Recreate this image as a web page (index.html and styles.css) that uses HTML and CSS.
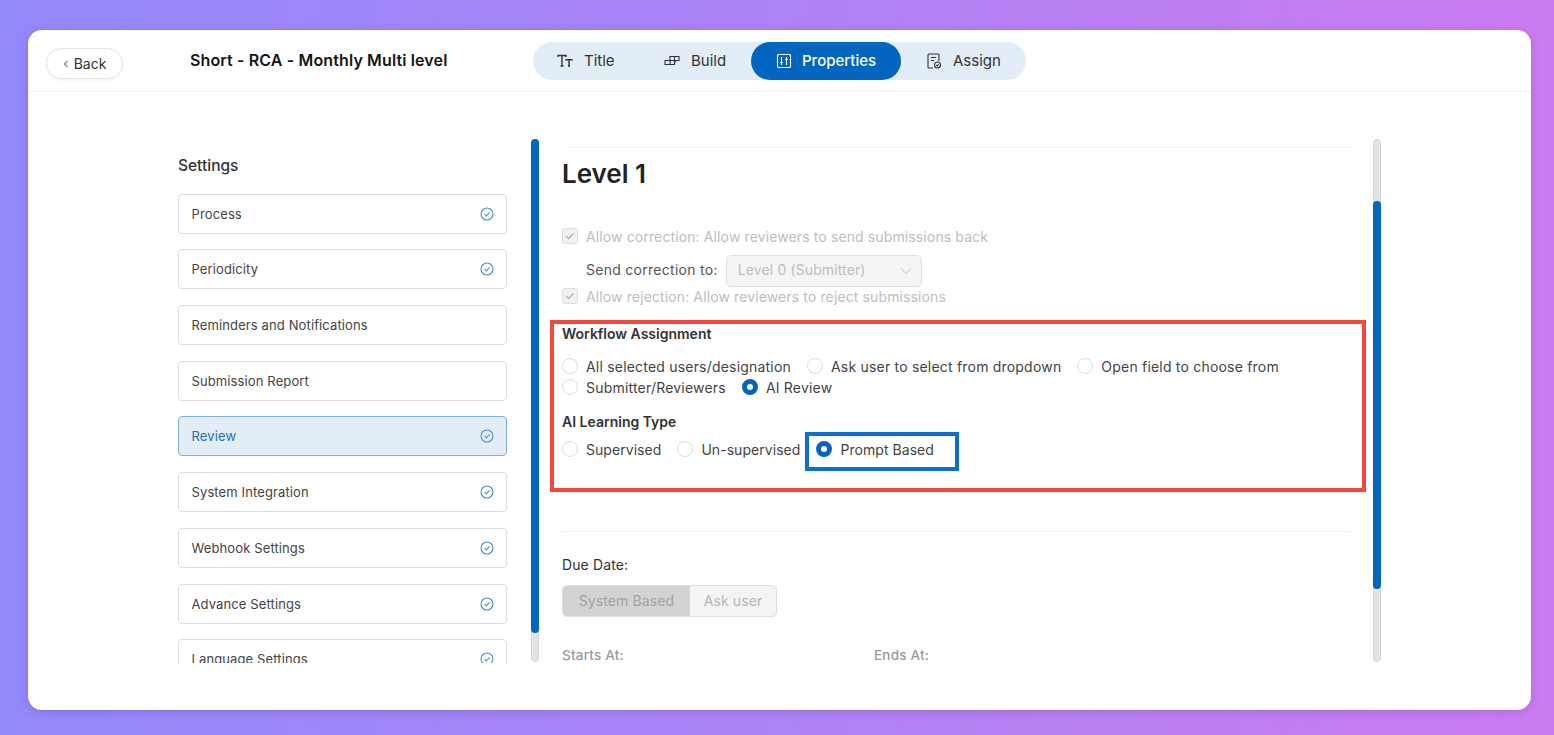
FILE: index.html
```html
<!DOCTYPE html>
<html lang="en">
<head>
<meta charset="utf-8">
<title>Short - RCA - Monthly Multi level</title>
<link rel="stylesheet" href="styles.css">
</head>
<body>
<div class="card">
  <header class="topbar">
    <button class="back"><svg class="back-icon" viewBox="0 0 6 8"><path d="M4.500 1 1.500 4l3 3"/></svg>Back</button>
    <div class="form-title">Short - RCA - Monthly Multi level</div>
    <nav class="tabs">
      <div class="tab tab-title">
        <svg class="tab-icon tab-icon-bold" viewBox="0 0 16 16"><path d="M1 4V2.500h8V4M5 2.500V13M3.500 13h3M9 7.500V6.700h6v.8M12 6.700V13M11 13h2"/></svg>Title
      </div>
      <div class="tab tab-build">
        <svg class="tab-icon" viewBox="0 0 16 16"><path d="M6 3.500h4.500v4H6zM10.500 3.500H15v4h-4.500zM1 7.500h9.500v4H1zM6 7.500v4M11 7.500v2.500"/></svg>Build
      </div>
      <div class="tab tab-active">
        <svg class="tab-icon" viewBox="0 0 16 16"><rect x="1.500" y="1.500" width="13" height="13" rx="1"/><path d="M5.500 4v8M10.500 4v8M4.300 9.500h2.400M9.300 6.500h2.400"/></svg>Properties
      </div>
      <div class="tab tab-assign">
        <svg class="tab-icon" viewBox="0 0 16 16"><path d="M7 15H3a1 1 0 0 1-1-1V2a1 1 0 0 1 1-1h9a1 1 0 0 1 1 1v6M5 4.500h5M5 7.500h3"/><circle cx="11.500" cy="12" r="3"/><path d="m10.300 12 .9.9 1.500-1.600"/></svg>Assign
      </div>
    </nav>
  </header>

  <main class="workspace">
    <aside class="sidebar">
      <h2 class="side-heading">Settings</h2>
      <ul class="side-list">
        <li class="side-item">Process<svg class="done" viewBox="0 0 14 14"><circle cx="7" cy="7" r="6"/><path d="m4.500 7.200 1.800 1.800 3.300-3.600"/></svg></li>
        <li class="side-item">Periodicity<svg class="done" viewBox="0 0 14 14"><circle cx="7" cy="7" r="6"/><path d="m4.500 7.200 1.800 1.800 3.300-3.600"/></svg></li>
        <li class="side-item">Reminders and Notifications</li>
        <li class="side-item">Submission Report</li>
        <li class="side-item side-active">Review<svg class="done" viewBox="0 0 14 14"><circle cx="7" cy="7" r="6"/><path d="m4.500 7.200 1.800 1.800 3.300-3.600"/></svg></li>
        <li class="side-item">System Integration<svg class="done" viewBox="0 0 14 14"><circle cx="7" cy="7" r="6"/><path d="m4.500 7.200 1.800 1.800 3.300-3.600"/></svg></li>
        <li class="side-item">Webhook Settings<svg class="done" viewBox="0 0 14 14"><circle cx="7" cy="7" r="6"/><path d="m4.500 7.200 1.800 1.800 3.300-3.600"/></svg></li>
        <li class="side-item">Advance Settings<svg class="done" viewBox="0 0 14 14"><circle cx="7" cy="7" r="6"/><path d="m4.500 7.200 1.800 1.800 3.300-3.600"/></svg></li>
        <li class="side-item">Language Settings<svg class="done" viewBox="0 0 14 14"><circle cx="7" cy="7" r="6"/><path d="m4.500 7.200 1.800 1.800 3.300-3.600"/></svg></li>
      </ul>
    </aside>

    <div class="scroll scroll-left"><div class="thumb thumb-left"></div></div>

    <section class="panel">
      <div class="panel-body">
        <hr class="rule rule-top">
        <h1 class="level">Level 1</h1>

        <label class="check-row row-correction"><span class="check"><svg viewBox="0 0 16 16"><path d="m3.500 8 3 3 5.500-6"/></svg></span>Allow correction: Allow reviewers to send submissions back</label>
        <div class="send-row">
          <span class="send-label">Send correction to:</span>
          <div class="select"><span class="select-value">Level 0 (Submitter)</span><svg viewBox="0 0 12 8"><path d="m1 1.500 5 5 5-5"/></svg></div>
        </div>
        <label class="check-row row-rejection"><span class="check"><svg viewBox="0 0 16 16"><path d="m3.500 8 3 3 5.500-6"/></svg></span>Allow rejection: Allow reviewers to reject submissions</label>

        <h3 class="group-title title-workflow">Workflow Assignment</h3>
        <div class="radio-wrap radios-assign">
          <label class="radio-item"><span class="radio"></span>All selected users/designation</label>
          <label class="radio-item"><span class="radio"></span>Ask user to select from dropdown</label>
          <label class="radio-item"><span class="radio"></span>Open field to choose from</label>
          <label class="radio-item"><span class="radio"></span>Submitter/Reviewers</label>
          <label class="radio-item"><span class="radio radio-on"></span>AI Review</label>
        </div>

        <h3 class="group-title title-ai">AI Learning Type</h3>
        <div class="radio-wrap radios-learning">
          <label class="radio-item"><span class="radio"></span>Supervised</label>
          <label class="radio-item"><span class="radio"></span>Un-supervised</label>
          <label class="radio-item"><span class="radio radio-on"></span>Prompt Based</label>
        </div>

        <hr class="rule rule-mid">

        <div class="due-label">Due Date:</div>
        <div class="segment">
          <span class="seg seg-on">System Based</span>
          <span class="seg seg-off">Ask user</span>
        </div>
        <div class="dates">
          <span class="date-label date-start">Starts At:</span>
          <span class="date-label">Ends At:</span>
        </div>
      </div>
      <div class="mark mark-red"></div>
      <div class="mark mark-blue"></div>
    </section>

    <div class="scroll scroll-right"><div class="thumb thumb-right"></div></div>
  </main>
</div>
</body>
</html>
```

FILE: styles.css
```css
* { box-sizing: border-box; }
html, body { height: 100%; }
body {
  margin: 0;
  padding: 30px 23px 25px 28px;
  overflow: hidden;
  background: linear-gradient(90deg, #9389fb 0%, #ad83f5 50%, #cb7bef 100%);
  font-family: Inter, "Noto Sans", "Liberation Sans", sans-serif;
  color: #2b2b2b;
}
.card {
  height: 680px;
  background: #fff;
  border-radius: 14px;
  box-shadow: 0 2px 10px rgba(70, 40, 130, .22);
  overflow: hidden;
}

/* top bar */
.topbar {
  height: 62px;
  display: flex;
  align-items: flex-start;
  padding-left: 18px;
  border-bottom: 1px solid #f0f0f0;
}
.back {
  width: 77px;
  height: 31px;
  margin-top: 18px;
  display: flex;
  align-items: center;
  justify-content: center;
  gap: 5px;
  background: #fff;
  border: 1px solid #e6e6e6;
  border-radius: 16px;
  box-shadow: 0 1px 3px rgba(0, 0, 0, .07);
  font: 400 14px Inter, sans-serif;
  color: #333;
  padding: 0;
}
.back-icon { width: 6px; height: 8px; fill: none; stroke: #333; stroke-width: 1; }
.form-title {
  width: 343px;
  margin: 20px 0 0 67px;
  font-size: 16px;
  letter-spacing: .13px;
  line-height: 20px;
  font-weight: 600;
  color: #151515;
  white-space: nowrap;
}
.tabs {
  margin-top: 12px;
  width: 493px;
  height: 38px;
  display: flex;
  align-items: center;
  background: #e3edf8;
  border-radius: 19px;
  font-size: 15px;
  color: #333;
}
.tab { height: 38px; padding-bottom: 1px; display: flex; align-items: center; gap: 11px; white-space: nowrap; }
.tab-icon { width: 16px; height: 16px; fill: none; stroke: #333; stroke-width: 1.100; flex: none; }
.tab-icon-bold { stroke-width: 1.400; }
.tab-title { width: 131px; padding-left: 24px; }
.tab-build { width: 87px; }
.tab-active {
  width: 150px;
  padding-left: 25px;
  gap: 10px;
  background: #0265c0;
  border-radius: 19px;
  color: #fff;
  font-weight: 500;
}
.tab-active .tab-icon { stroke: #fff; }
.tab-assign { padding-left: 25px; }

/* main area */
.workspace {
  height: 571px;
  margin-top: 47px;
  padding-left: 150px;
  display: flex;
  align-items: flex-start;
}
.sidebar { width: 329px; height: 524px; overflow: hidden; flex: none; }
.side-heading {
  margin: 17px 0 17.700px;
  font-size: 15.500px;
  line-height: 20px;
  font-weight: 500;
  color: #333;
}
.side-list { list-style: none; margin: 0; padding: 0; display: flex; flex-direction: column; gap: 15.700px; }
.side-item {
  height: 40px;
  flex: none;
  display: flex;
  align-items: center;
  justify-content: space-between;
  padding: 0 12px 0 12.500px;
  border: 1px solid #dcdcdc;
  border-radius: 4px;
  font-size: 13px;
  letter-spacing: .12px;
  line-height: 38px;
  color: #444;
}
.side-active { background: #e3edf8; border-color: #7fb0da; color: #2a6fb0; }
.done { width: 14px; height: 14px; fill: none; stroke: #4a90d9; stroke-width: 1.100; flex: none; }

/* scrollbars */
.scroll {
  width: 8px;
  height: 523px;
  flex: none;
  background: #e2e2e2;
  border: 1px solid #d8d8d8;
  border-radius: 4px;
}
.scroll-left { margin-left: 24px; }
.thumb { margin: -1px; background: #0265c0; border-radius: 4px; }
.thumb-left { height: 494px; }
.thumb-right { height: 388px; margin-top: 61px; }

/* panel */
.panel { width: 834px; height: 524px; position: relative; overflow: hidden; flex: none; }
.panel-body { padding-left: 23px; font-size: 14px; letter-spacing: .12px; }
.rule { border: 0; height: 1px; margin: 0; background: #f1f1f1; }
.rule-top { margin: 8px 20px 0 6px; }
.level { margin: 8px 0 0; font-size: 26px; line-height: 36px; font-weight: 600; letter-spacing: 0; color: #222; }
.check-row { display: flex; align-items: center; height: 20px; color: #bdbdbd; }
.row-correction { margin-top: 34px; }
.row-rejection { height: 18px; }
.check {
  width: 16px;
  height: 16px;
  margin-right: 8px;
  flex: none;
  background: #f1f1f1;
  border: 1px solid #dedede;
  border-radius: 3px;
}
.check svg { display: block; width: 14px; height: 14px; fill: none; stroke: #a8a8a8; stroke-width: 1.300; }
.send-row { height: 32px; margin-top: 9px; padding-left: 24px; display: flex; align-items: center; gap: 8px; color: #555; }
.send-label { padding-bottom: 3px; letter-spacing: .28px; }
.select {
  width: 196px;
  height: 32px;
  display: flex;
  align-items: center;
  justify-content: space-between;
  padding: 0 9px 0 11px;
  background: #f5f5f5;
  border: 1px solid #e0e0e0;
  border-radius: 5px;
  color: #bdbdbd;
}
.select-value { padding-bottom: 3px; }
.select svg { width: 12px; height: 8px; fill: none; stroke: #bdbdbd; stroke-width: 1; }
.group-title { margin: 0; font-size: 14px; line-height: 20px; font-weight: 600; letter-spacing: 0; color: #333; }
.title-workflow { margin-top: 19px; }
.title-ai { margin-top: 15px; }
.radio-wrap { display: flex; flex-wrap: wrap; width: 780px; column-gap: 16px; row-gap: 1px; }
.radios-assign { margin-top: 12px; letter-spacing: .2px; }
.radios-learning { margin-top: 7px; letter-spacing: .05px; }
.radio-item { display: flex; align-items: center; height: 20px; color: #444; white-space: nowrap; }
.radio {
  width: 16px;
  height: 16px;
  margin-right: 8px;
  flex: none;
  background: #fff;
  border: 1px solid #dcdcdc;
  border-radius: 50%;
}
.radio-on { border: 5px solid #0265c0; }
.rule-mid { margin: 72px 23px 0 0; }
.due-label { margin-top: 23px; line-height: 20px; color: #333; }
.segment {
  width: 215px;
  height: 32px;
  margin-top: 10px;
  display: flex;
  background: #f4f4f4;
  border: 1px solid #e0e0e0;
  border-radius: 5px;
  overflow: hidden;
  color: #b5b5b5;
}
.seg { padding-bottom: 1px; display: flex; align-items: center; justify-content: center; }
.seg-on { width: 127px; background: #d3d3d3; color: #a2a2a2; }
.seg-off { flex: 1; }
.dates { margin-top: 28px; display: flex; font-size: 13.500px; letter-spacing: .2px; line-height: 20px; font-weight: 500; color: #9a9a9a; }
.date-start { width: 312px; }

/* annotations */
.mark { position: absolute; pointer-events: none; }
.mark-red { left: 11px; top: 181px; width: 816px; height: 172px; border: 4px solid #f4483f; }
.mark-blue { left: 266px; top: 293px; width: 154px; height: 39px; border: 4px solid #0a6fd0; }
```
